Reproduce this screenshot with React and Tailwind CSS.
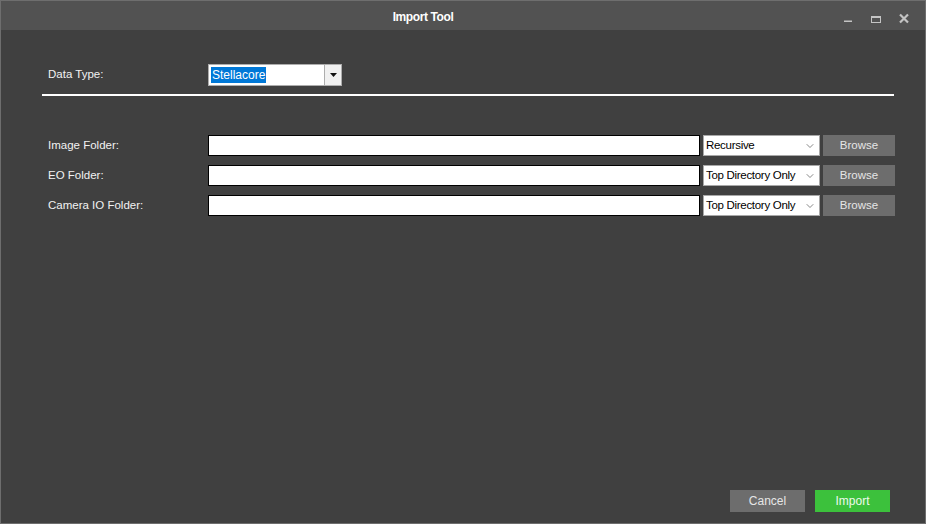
import { ChevronDown } from 'lucide-react';

const folderRows = [
  { label: 'Image Folder:', mode: 'Recursive' },
  { label: 'EO Folder:', mode: 'Top Directory Only' },
  { label: 'Camera IO Folder:', mode: 'Top Directory Only' },
];

const App = () => {
  return (
    <div className="w-[926px] h-[524px] border border-[#6e6e6e] bg-[#404040] flex flex-col font-['Liberation_Sans',Arial,sans-serif] text-[#f2f2f2] overflow-hidden">
      {/* Title bar */}
      <div className="h-[29px] bg-[#525252] flex items-stretch shrink-0">
        <div className="flex-1 flex items-center justify-center pt-[3px] font-bold text-[12px] tracking-[-0.4px] text-white">
          Import Tool
        </div>
        <div className="w-[80px] flex items-stretch text-[#c4c4c4]">
          <svg width="9" height="29" viewBox="0 0 9 29" className="ml-[-1px]">
            <rect x="0" y="19.5" width="8" height="1.5" fill="currentColor" />
          </svg>
          <svg width="10" height="29" viewBox="0 0 10 29" className="ml-[18px]">
            <rect x="0.5" y="15.5" width="9" height="6" fill="none" stroke="currentColor" />
            <rect x="0" y="15" width="10" height="2" fill="currentColor" />
          </svg>
          <svg width="10" height="29" viewBox="0 0 10 29" className="ml-[18px]">
            <path d="M1 13.5 L9 21.5 M9 13.5 L1 21.5" stroke="currentColor" strokeWidth="2.2" />
          </svg>
        </div>
      </div>

      {/* Body */}
      <div className="flex-1 flex flex-col pl-[41px] pr-[31px]">
        <div className="flex items-center pl-[6px] mt-[34px] text-[11.5px]">
          <span className="w-[160px] shrink-0">Data Type:</span>
          <div className="w-[134px] h-[22px] border border-[#adadad] bg-white flex">
            <div className="flex-1 flex items-center pl-[2px]">
              <span className="bg-[#0078d7] text-white px-[1px] leading-[16px] text-[12px]">Stellacore</span>
            </div>
            <div className="w-[17px] bg-[#f0f0f0] border-l border-[#adadad] flex items-center justify-center">
              <svg width="7" height="4" viewBox="0 0 7 4">
                <path d="M0 0 H7 L3.5 4 Z" fill="#111" />
              </svg>
            </div>
          </div>
        </div>

        <div className="h-[2px] bg-white mt-[8px]" />

        <div className="flex flex-col gap-[9px] mt-[39px]">
          {folderRows.map((row) => (
            <div key={row.label} className="flex items-center pl-[6px] h-[21px]">
              <span className="w-[160px] shrink-0 text-[11.5px]">{row.label}</span>
              <div className="w-[492px] shrink-0 h-[21px] bg-white border border-black" />
              <div className="ml-[3px] w-[117px] shrink-0 h-[21px] bg-white border border-[#a8a8a8] flex items-center pl-[2px] pr-[3px] text-black text-[11.5px] tracking-[-0.3px]">
                <span className="flex-1">{row.mode}</span>
                <ChevronDown size={12} strokeWidth={1.4} className="text-[#555555]" />
              </div>
              <button className="ml-[3px] w-[72px] shrink-0 h-[21px] bg-[#6d6d6d] text-[#e6e6e6] text-[11.5px]">
                Browse
              </button>
            </div>
          ))}
        </div>

        <div className="flex-1" />

        <div className="flex justify-end gap-[10px] pr-[4px] mb-[11px] text-[12px]">
          <button className="w-[75px] h-[22px] bg-[#6d6d6d] text-[#e6e6e6]">Cancel</button>
          <button className="w-[75px] h-[22px] bg-[#3cc13c] text-[#eefaee]">Import</button>
        </div>
      </div>
    </div>
  );
};

export default App;
